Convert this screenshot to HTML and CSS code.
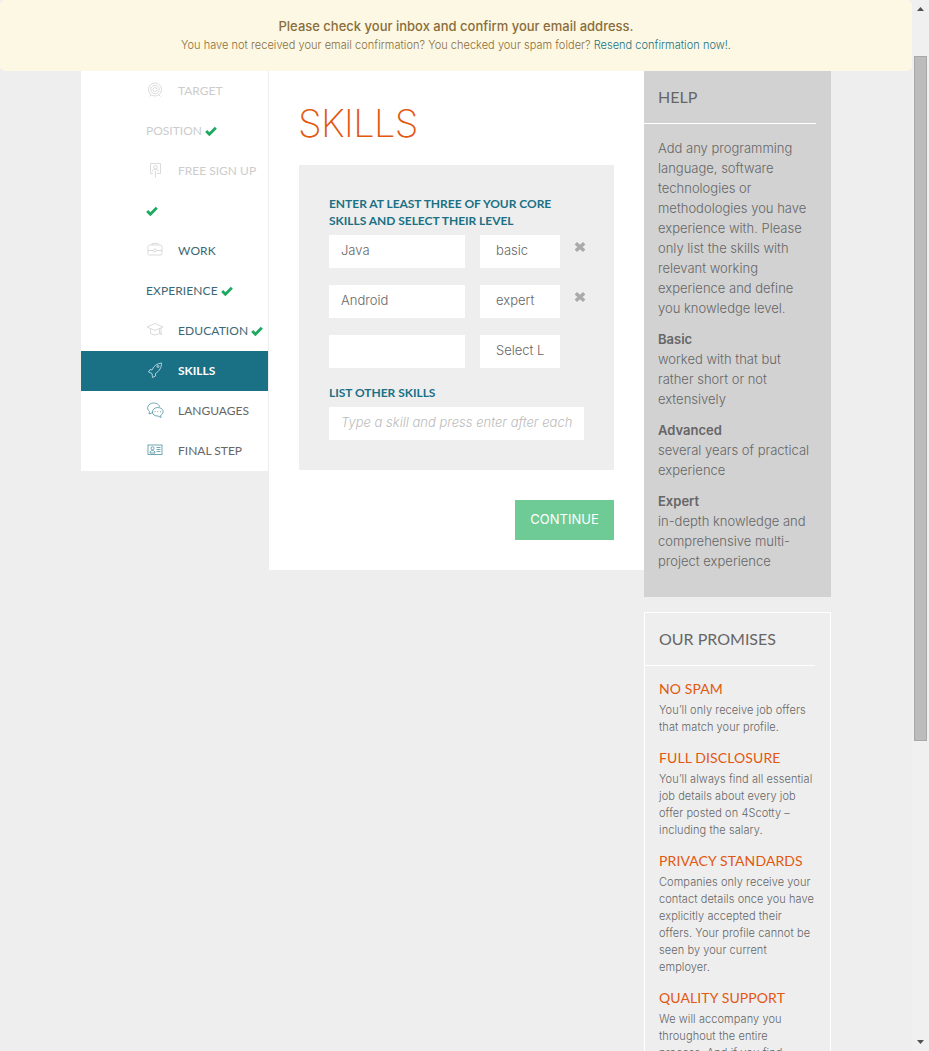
FILE: index.html
```html
<!DOCTYPE html>
<html lang="en">
<head>
<meta charset="utf-8">
<title>Skills</title>
<link rel="stylesheet" href="styles.css">
</head>
<body>
<svg class="defs" width="0" height="0">
  <symbol id="check" viewBox="0 0 12 10"><path d="M1.2 5 4.4 8.2 10.8 1.8" fill="none" stroke="currentColor" stroke-width="2.9"/></symbol>
  <symbol id="cross" viewBox="0 0 12 12"><path d="M1.8 2.2 10.2 9.8M10.2 2.2 1.8 9.8" fill="none" stroke="currentColor" stroke-width="3.5"/></symbol>
</svg>
<div class="window">
  <div class="viewport">
    <div class="alert">
      <p class="alert-title">Please check your inbox and confirm your email address.</p>
      <p class="alert-text">You have not received your email confirmation? You checked your spam folder? <a class="resend">Resend confirmation now!</a>.</p>
    </div>
    <div class="page">
      <ul class="steps">
        <li class="step muted"><svg class="icon" viewBox="0 0 18 18"><circle cx="9" cy="8.5" r="6.5"/><circle cx="9" cy="8.5" r="4.2"/><circle cx="9" cy="8.5" r="2"/><path d="M5 14l-1.500 1.500M13 14l1.500 1.500"/></svg>TARGET<br>POSITION <svg class="check"><use href="#check"/></svg></li>
        <li class="step muted"><svg class="icon" viewBox="0 0 18 18"><path d="M7 12.500H4.500V2.500h10v10H11M9.500 10v6.500M6.500 10.500c0-3 6-3 6 0"/><circle cx="9.500" cy="6.200" r="1.800"/></svg>FREE SIGN UP<br><svg class="check"><use href="#check"/></svg></li>
        <li class="step done"><svg class="icon" viewBox="0 0 18 18"><rect x="2" y="4" width="14" height="10" rx="1.500"/><path d="M6 4v-1.500h6V4M2 9.500h5.500M10.500 9.500H16"/><circle cx="9" cy="9.500" r="1.500"/></svg>WORK<br>EXPERIENCE <svg class="check"><use href="#check"/></svg></li>
        <li class="step done"><svg class="icon" viewBox="0 0 18 18"><path d="M1 6l8-3.500L17 6 9 9.500zM4.500 8v4.500q4.500 3 9 0V8M15 7v5M14 14l1-2 1 2"/></svg>EDUCATION <svg class="check"><use href="#check"/></svg></li>
        <li class="step active"><svg class="icon" viewBox="0 0 18 18"><path d="M6 9C7.500 5 11 2.500 15.500 2c0 4.500-2 8-6 10.500L9.500 15l-3 1.500L6 12.500 2.500 11 4 8.500z"/><circle cx="12" cy="5.500" r="1"/></svg>SKILLS</li>
        <li class="step"><svg class="icon teal" viewBox="0 0 18 18"><path d="M7 11.500 3 13l.5-2.500C-.5 7.500 2.500 2 7.500 2 11 2 13.500 4 13.500 6"/><path d="M14.500 14.500l.5 2-3-1.500C5 15.500 4.500 7 11.500 6.500c6 0 7.500 5.500 3 8z"/><path d="M8.500 10.700h1M11.200 10.700h1M14 10.700h1"/></svg>LANGUAGES</li>
        <li class="step"><svg class="icon teal" viewBox="0 0 18 18"><rect x="2" y="4" width="14" height="9.500"/><path d="M4 12c0-3.500 5-3.500 5 0zM10.500 6.500h4M10.500 8.500h4M10.500 10.500h4"/><circle cx="6.500" cy="7.200" r="1.500"/></svg>FINAL STEP</li>
      </ul>
      <main class="main">
        <h1 class="title">SKILLS</h1>
        <form class="panel">
          <div class="label">ENTER AT LEAST THREE OF YOUR CORE<br>SKILLS AND SELECT THEIR LEVEL</div>
          <div class="skill-row"><div class="field name">Java</div><div class="field level">basic</div><svg class="cross"><use href="#cross"/></svg></div>
          <div class="skill-row"><div class="field name">Android</div><div class="field level">expert</div><svg class="cross"><use href="#cross"/></svg></div>
          <div class="skill-row last"><div class="field name"></div><div class="field level">Select L</div></div>
          <div class="label">LIST OTHER SKILLS</div>
          <div class="field other">Type a skill and press enter after each</div>
        </form>
        <div class="actions"><div class="button">CONTINUE</div></div>
      </main>
      <aside class="side">
        <section class="help">
          <h2 class="heading">HELP</h2>
          <div class="help-body">
            <p>Add any programming<br>language, software<br>technologies or<br>methodologies you have<br>experience with. Please<br>only list the skills with<br>relevant working<br>experience and define<br>you knowledge level.</p>
            <p><b>Basic</b><br>worked with that but<br>rather short or not<br>extensively</p>
            <p><b>Advanced</b><br>several years of practical<br>experience</p>
            <p><b>Expert</b><br>in-depth knowledge and<br>comprehensive multi-<br>project experience</p>
          </div>
        </section>
        <section class="promises">
          <h2 class="heading">OUR PROMISES</h2>
          <div class="promise-list">
            <div><h3 class="promise">NO SPAM</h3><p>You’ll only receive job offers<br>that match your profile.</p></div>
            <div><h3 class="promise">FULL DISCLOSURE</h3><p>You’ll always find all essential<br>job details about every job<br>offer posted on 4Scotty –<br>including the salary.</p></div>
            <div><h3 class="promise">PRIVACY STANDARDS</h3><p>Companies only receive your<br>contact details once you have<br>explicitly accepted their<br>offers. Your profile cannot be<br>seen by your current<br>employer.</p></div>
            <div><h3 class="promise">QUALITY SUPPORT</h3><p>We will accompany you<br>throughout the entire<br>process. And if you find</p></div>
          </div>
        </section>
      </aside>
    </div>
  </div>
  <div class="scrollbar">
    <svg class="arrow" viewBox="0 0 7 4"><path d="M3.500 0 7 4H0z"/></svg>
    <div class="thumb"></div>
    <svg class="arrow down" viewBox="0 0 7 4"><path d="M0 0h7L3.500 4z"/></svg>
  </div>
</div>
</body>
</html>
```
FILE: styles.css
```css
* { box-sizing: border-box; }
body { margin: 0; background: #eee; color: #666; font-family: Inter, "Open Sans", sans-serif; font-weight: 300; white-space: nowrap; }
p, h1, h2, h3, ul { margin: 0; padding: 0; }
.defs { display: block; }
.window { display: flex; height: 1051px; overflow: hidden; }
.viewport { width: 912px; height: 1051px; overflow: hidden; }
.alert { height: 71px; padding-top: 16px; background: #fcf8e3; border-radius: 5px; color: #8a6d3b; text-align: center; }
.alert-title { font-size: 13px; font-weight: 500; line-height: 20px; }
.alert-text { font-size: 11px; line-height: 18px; letter-spacing: .03px; }
.resend { color: #1a7186; }
.page { display: flex; align-items: flex-start; padding-left: 81px; }

.steps { width: 188px; border-right: 1px solid #eee; list-style: none; font-family: Lato, sans-serif; font-weight: 400; font-size: 12px; line-height: 40px; background: #fff; }
.step { padding-left: 65px; }
.icon { width: 18px; height: 18px; margin: 0 14px 0 0; vertical-align: -4px; fill: none; stroke: #d2d2d2; stroke-width: .8; }
.icon.teal { stroke: #4f91a1; }
.check { width: 12px; height: 10px; color: #1fa860; vertical-align: -1px; }
.muted { color: #ccc; }
.done { color: #3c6875; letter-spacing: .1px; }
.active { background: #1a7186; color: #fff; font-weight: 700; }
.active .icon { stroke: #d5e7eb; }

.main { width: 375px; height: 499px; padding: 27px 30px 0; background: #fff; }
.title { margin-left: -1px; color: #e2580f; font-weight: 200; font-size: 38px; line-height: 50px; letter-spacing: -.6px; }
.panel { height: 305px; margin-top: 17px; padding: 30px; background: #eee; }
.label { margin-bottom: 6px; color: #1a7186; font: 700 12px/17px Lato, sans-serif; letter-spacing: -.03px; }
.skill-row { display: flex; gap: 15px; height: 33px; margin-bottom: 17px; }
.skill-row.last { margin-bottom: 16px; }
.field { flex-shrink: 0; height: 33px; padding-left: 12px; background: #fff; font-size: 13px; line-height: 31px; }
.name { width: 136px; }
.level { width: 80px; padding-left: 16px; }
.other { color: #bbb; font-style: italic; }
.cross { flex-shrink: 0; width: 12px; height: 12px; margin: 6px 0 0 -1px; color: #aaa; }
.actions { display: flex; justify-content: flex-end; margin-top: 30px; }
.button { width: 99px; height: 40px; background: #6fcb96; color: #fff; font-size: 13px; font-weight: 400; line-height: 39px; text-align: center; }

.side { width: 187px; }
.heading { margin-right: 15px; padding-left: 14px; border-bottom: 1px solid #fff; font: 400 16px/52px Lato, sans-serif; }
.help { height: 526px; background: #d2d2d2; }
.help-body { padding: 14px; font-size: 13px; line-height: 20px; }
.help-body p { margin-bottom: 11px; }
.help-body b { font-weight: 600; }
.promises { height: 500px; margin-top: 15px; border: 1px solid #fff; }
.promise-list { display: grid; gap: 10px; padding: 11px 14px; font-size: 11px; line-height: 17px; letter-spacing: .08px; }
.promise { padding-bottom: 2px; color: #e2580f; font: 400 14px/23px Lato, sans-serif; letter-spacing: .1px; }

.scrollbar { display: flex; flex-direction: column; align-items: center; width: 17px; height: 1051px; padding: 7px 0; background: #f0f0f0; }
.arrow { width: 7px; height: 4px; fill: #505050; }
.thumb { width: 13px; height: 685px; margin-top: 45px; background: #bcbcbc; border: 1px solid #a8a8a8; }
.down { margin-top: auto; }
```
